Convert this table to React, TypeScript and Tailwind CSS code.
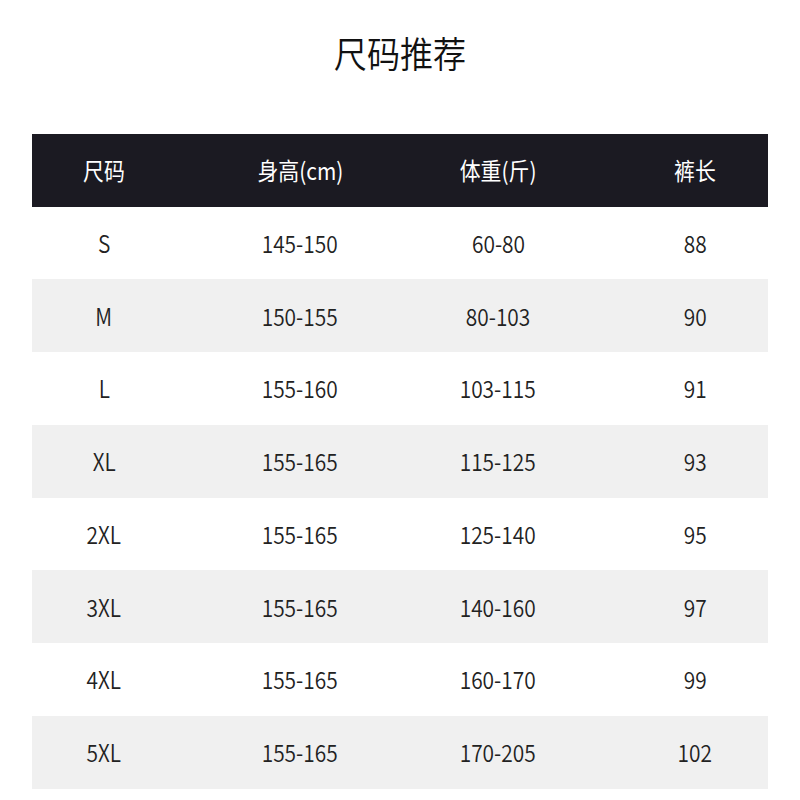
import React from "react";

const rows = [
  ["S", "145-150", "60-80", "88"],
  ["M", "150-155", "80-103", "90"],
  ["L", "155-160", "103-115", "91"],
  ["XL", "155-165", "115-125", "93"],
  ["2XL", "155-165", "125-140", "95"],
  ["3XL", "155-165", "140-160", "97"],
  ["4XL", "155-165", "160-170", "99"],
  ["5XL", "155-165", "170-205", "102"],
];

const headers = ["尺码", "身高(cm)", "体重(斤)", "裤长"];

function Cell({ text, i, className }: { text: string; i: number; className?: string }) {
  return (
    <div className={"flex items-center justify-center " + (i === 3 ? "pl-[50px] " : "") + (className ?? "")}>
      <span className="inline-block scale-x-[0.87]">{text}</span>
    </div>
  );
}

export default function App() {
  return (
    <div
      className="w-[800px] h-[800px] bg-white overflow-hidden"
      style={{ fontFamily: '"Noto Sans CJK SC", "Noto Sans", sans-serif' }}
    >
      <div className="pt-[32px] h-[74px] flex justify-center">
        <div className="text-[36px] leading-[40px] font-[350] text-[#111] scale-x-[0.92]">尺码推荐</div>
      </div>
      <div className="mt-[60px] mx-[32px] w-[736px]">
        <div className="grid grid-cols-[144px_248px_148px_196px] h-[72.5px] bg-[#1b1a22] text-white text-[24px] font-normal">
          {headers.map((h, i) => (
            <Cell key={h} text={h} i={i} />
          ))}
        </div>
        {rows.map((r, ri) => (
          <div
            key={r[0]}
            className={
              "grid grid-cols-[144px_248px_148px_196px] h-[72.75px] text-[24px] font-[350] text-[#222] " +
              (ri % 2 === 1 ? "bg-[#f0f0f0]" : "bg-white")
            }
          >
            {r.map((t, i) => (
              <Cell key={i} text={t} i={i} />
            ))}
          </div>
        ))}
      </div>
    </div>
  );
}
